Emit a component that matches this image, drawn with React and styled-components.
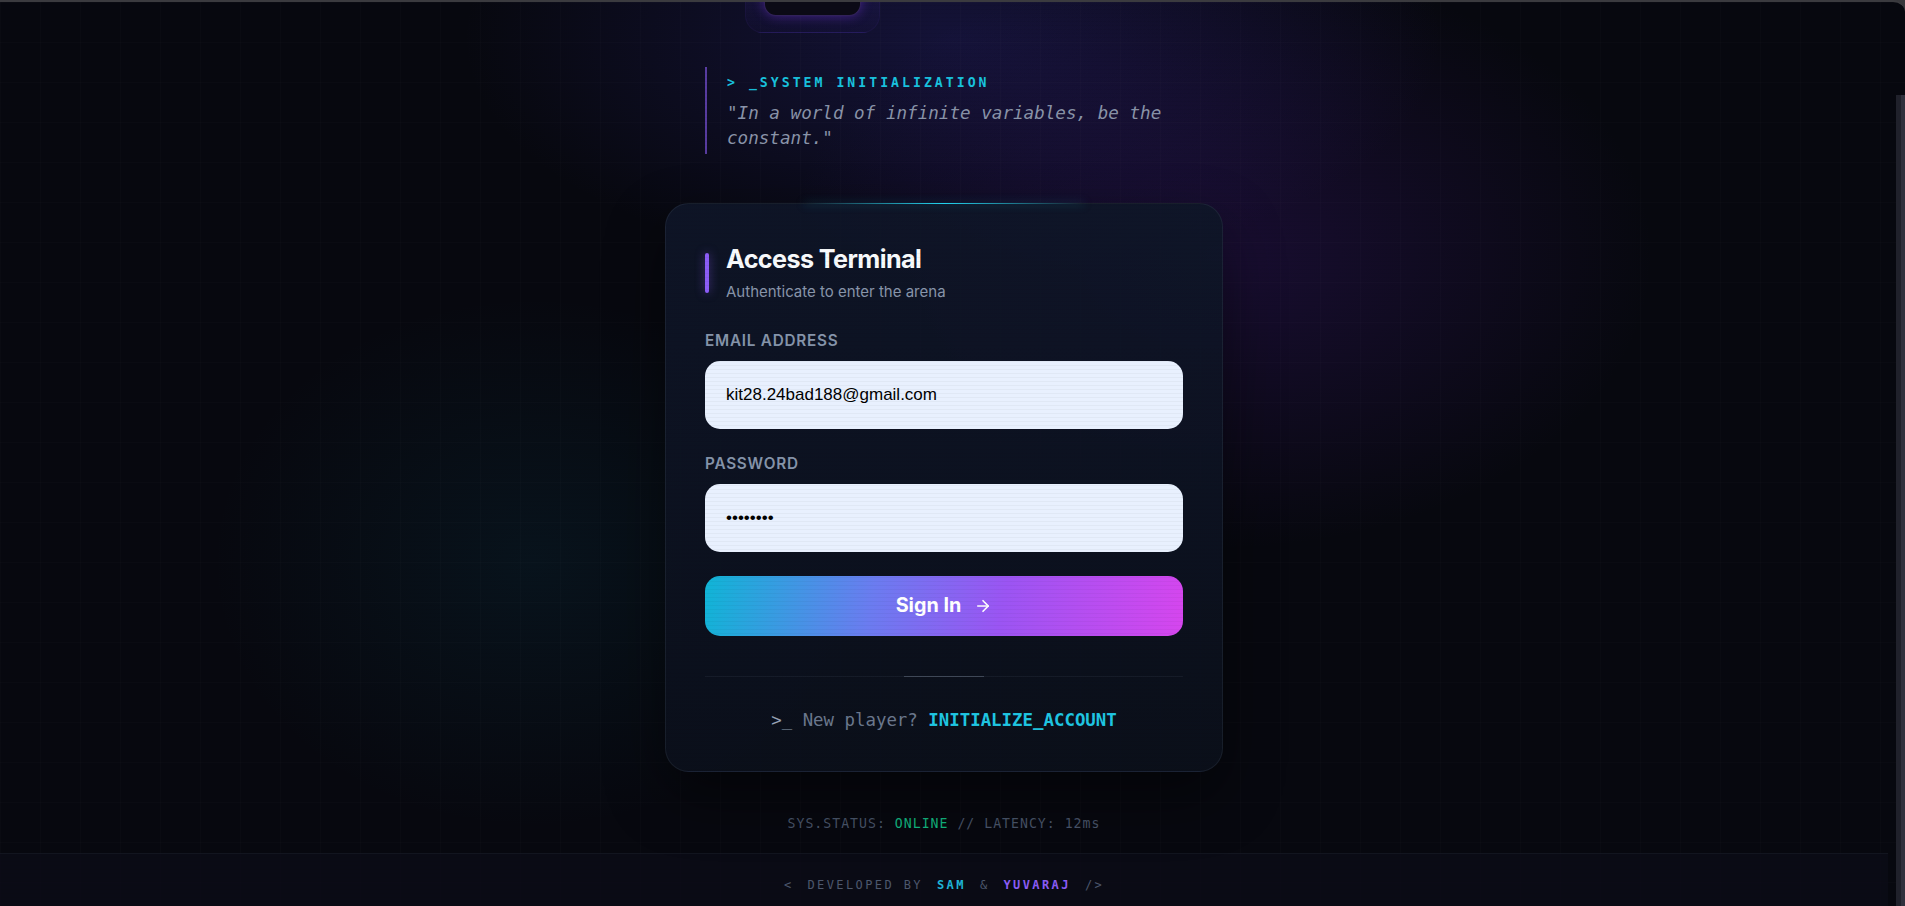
import React, { useLayoutEffect, useRef } from 'react';
import styled, { createGlobalStyle } from 'styled-components';
import { ArrowRight } from 'lucide-react';

const GlobalStyle = createGlobalStyle`
  html, body {
    margin: 0;
    padding: 0;
    height: 100%;
    overflow: hidden;
    background: #38383c;
  }
  #root { height: 100%; }
  * { box-sizing: border-box; }
`;

const SANS = `Inter, "Noto Sans", sans-serif`;
const MONO = `"DejaVu Sans Mono", "Liberation Mono", monospace`;

const Frame = styled.div`
  position: relative;
  height: 100vh;
  border-top: 2px solid #3b3b3f;
  border-top-right-radius: 12px;
  overflow: hidden;
  background:
    linear-gradient(rgba(255, 255, 255, 0.012) 1px, transparent 1px) 0 0 / 40px 40px,
    linear-gradient(90deg, rgba(255, 255, 255, 0.012) 1px, transparent 1px) 0 0 / 40px 40px,
    radial-gradient(ellipse 620px 420px at 64% 28%, rgba(76, 29, 149, 0.26), transparent 70%),
    radial-gradient(ellipse 700px 340px at 50% 4%, rgba(67, 56, 202, 0.22), transparent 70%),
    radial-gradient(ellipse 460px 380px at 28% 62%, rgba(14, 116, 144, 0.1), transparent 70%),
    #07080f;

  &::after {
    content: '';
    position: absolute;
    inset: 0;
    pointer-events: none;
    background: repeating-linear-gradient(0deg, rgba(0, 0, 0, 0.035) 0 1px, transparent 1px 4px);
  }
`;

const Scroller = styled.div`
  height: 100%;
  padding-right: 17px;
  overflow-y: auto;
  scrollbar-width: none;
  &::-webkit-scrollbar { display: none; }
`;

/* the browser's scrollbar thumb, pinned to the right edge over the page */
const ScrollThumb = styled.div`
  position: absolute;
  top: 93px;
  right: 0;
  bottom: 0;
  width: 9px;
  z-index: 2;
  background: linear-gradient(90deg, #20212b 0 5px, #30313d 5px);
`;

const Main = styled.main`
  display: flex;
  flex-direction: column;
  align-items: center;
  padding-top: 32px;
`;

const Brand = styled.div`
  width: 478px;
  display: flex;
`;

const LogoShell = styled.div`
  margin-left: 40px;
  width: 135px;
  padding: 16px 18px;
  border-radius: 18px;
  border: 1px solid rgba(139, 92, 246, 0.06);
  background: linear-gradient(180deg, rgba(76, 50, 190, 0.26), rgba(46, 30, 110, 0.08));
`;

const LogoCore = styled.div`
  height: 66px;
  border-radius: 12px;
  background: #0b0a16;
  border: 1px solid rgba(139, 92, 246, 0.3);
  box-shadow: 0 0 12px rgba(124, 58, 237, 0.45);
`;

const Intro = styled.div`
  width: 478px;
  margin-top: 34px;
  padding: 6px 0 3px 20px;
  border-left: 2px solid rgba(139, 92, 246, 0.6);
`;

const IntroLabel = styled.div`
  font: 700 13.2px/20px ${MONO};
  letter-spacing: 3px;
  color: #19c3df;
  margin-bottom: 8px;
`;

const Quote = styled.p`
  margin: 0;
  font: italic 17.6px/25px ${MONO};
  color: #8a94a9;
`;

const Card = styled.section`
  position: relative;
  width: 558px;
  margin-top: 49px;
  padding: 39px;
  border-radius: 24px;
  border: 1px solid rgba(148, 163, 184, 0.1);
  background: linear-gradient(180deg, rgba(15, 22, 40, 0.92), rgba(11, 16, 27, 0.94));
  box-shadow: 0 24px 60px rgba(0, 0, 0, 0.45);

  &::before {
    content: '';
    position: absolute;
    top: -1px;
    left: 50%;
    width: 280px;
    margin-left: -140px;
    height: 1px;
    background: linear-gradient(90deg, transparent, #22d3ee, transparent);
    box-shadow: 0 0 8px rgba(34, 211, 238, 0.5);
  }
`;

const Header = styled.div`
  display: flex;
  align-items: center;
  gap: 17px;
`;

const Accent = styled.span`
  width: 4px;
  height: 40px;
  border-radius: 2px;
  background: #8b5cf6;
  box-shadow: 0 0 10px rgba(139, 92, 246, 0.5);
`;

const Title = styled.h1`
  margin: 0;
  font: 700 25.2px/32px ${SANS};
  letter-spacing: -0.6px;
  color: #f8fafc;
`;

const Subtitle = styled.p`
  margin: 6px 0 0;
  font: 400 15px/22px ${SANS};
  color: #8895aa;
`;

const Form = styled.form`
  display: flex;
  flex-direction: column;
  gap: 24px;
  margin-top: 27px;
`;

const Field = styled.label`
  display: flex;
  flex-direction: column;
  gap: 9px;
`;

const LabelText = styled.span`
  font: 600 15.3px/22px ${SANS};
  letter-spacing: 0.05em;
  text-transform: uppercase;
  color: #8594aa;
`;

const Input = styled.input`
  width: 100%;
  height: 68px;
  padding: 0 21px;
  border: none;
  border-radius: 15px;
  outline: none;
  background: #e8f0fe;
  color: #000;
  font: 17px "Liberation Sans", Arial, sans-serif;
`;

const SubmitButton = styled.button`
  height: 60px;
  border: none;
  border-radius: 15px;
  display: flex;
  align-items: center;
  justify-content: center;
  gap: 13px;
  background: linear-gradient(100deg, #0fb5d6 0%, #6b7cf0 35%, #9b55f3 62%, #d646ee 100%);
  color: #fff;
  font: 700 19.8px/1 ${SANS};
  cursor: pointer;
`;

const Divider = styled.div`
  height: 1px;
  margin-top: 40px;
  background: linear-gradient(
    90deg,
    rgba(148, 163, 184, 0.08) 0 calc(50% - 40px),
    rgba(148, 163, 184, 0.38) calc(50% - 40px) calc(50% + 40px),
    rgba(148, 163, 184, 0.08) calc(50% + 40px)
  );
`;

const Signup = styled.p`
  margin: 31px 0 0;
  text-align: center;
  font: 17.4px/24px ${MONO};
  color: #6b788d;
`;

const Prompt = styled.span`
  color: #97a2b4;
`;

const SignupLink = styled.a`
  color: #1fc6e2;
  font-weight: 700;
  text-decoration: none;
`;

const Status = styled.p`
  margin: 43px 0 0;
  font: 13.2px/18px ${MONO};
  letter-spacing: 1px;
  color: #4a566b;
`;

const Online = styled.span`
  color: #12b981;
`;

const Footer = styled.footer`
  margin-top: 20px;
  padding: 22px 0 12px;
  border-top: 1px solid rgba(148, 163, 184, 0.07);
  background: rgba(12, 12, 24, 0.75);
  display: flex;
  justify-content: center;
  gap: 14px;
  font: 12px/18px ${MONO};
  letter-spacing: 2.4px;
  color: #4d586d;
`;

const Dev = styled.span`
  font-weight: 700;
  color: ${p => p.tone};
`;

export default function App() {
  const scrollRef = useRef(null);

  useLayoutEffect(() => {
    const el = scrollRef.current;
    if (el) el.scrollTop = el.scrollHeight;
  }, []);

  return (
    <>
      <GlobalStyle />
      <Frame>
        <Scroller ref={scrollRef}>
          <Main>
            <Brand>
              <LogoShell>
                <LogoCore />
              </LogoShell>
            </Brand>

            <Intro>
              <IntroLabel>{'> _SYSTEM INITIALIZATION'}</IntroLabel>
              <Quote>"In a world of infinite variables, be the constant."</Quote>
            </Intro>

            <Card>
              <Header>
                <Accent />
                <div>
                  <Title>Access Terminal</Title>
                  <Subtitle>Authenticate to enter the arena</Subtitle>
                </div>
              </Header>

              <Form onSubmit={e => e.preventDefault()}>
                <Field>
                  <LabelText>Email Address</LabelText>
                  <Input type="email" defaultValue="kit28.24bad188@gmail.com" readOnly />
                </Field>
                <Field>
                  <LabelText>Password</LabelText>
                  <Input type="password" defaultValue="password" readOnly />
                </Field>
                <SubmitButton type="submit">
                  Sign In
                  <ArrowRight size={18} strokeWidth={2.2} />
                </SubmitButton>
              </Form>

              <Divider />

              <Signup>
                <Prompt>{'>_'}</Prompt> New player? <SignupLink href="#">INITIALIZE_ACCOUNT</SignupLink>
              </Signup>
            </Card>

            <Status>
              SYS.STATUS: <Online>ONLINE</Online> // LATENCY: 12ms
            </Status>
          </Main>

          <Footer>
            <span>{'<'}</span>
            <span>DEVELOPED BY</span>
            <Dev tone="#1fb6d8">SAM</Dev>
            <span>&amp;</span>
            <Dev tone="#8b5cf6">YUVARAJ</Dev>
            <span>{'/>'}</span>
          </Footer>
        </Scroller>
        <ScrollThumb />
      </Frame>
    </>
  );
}
